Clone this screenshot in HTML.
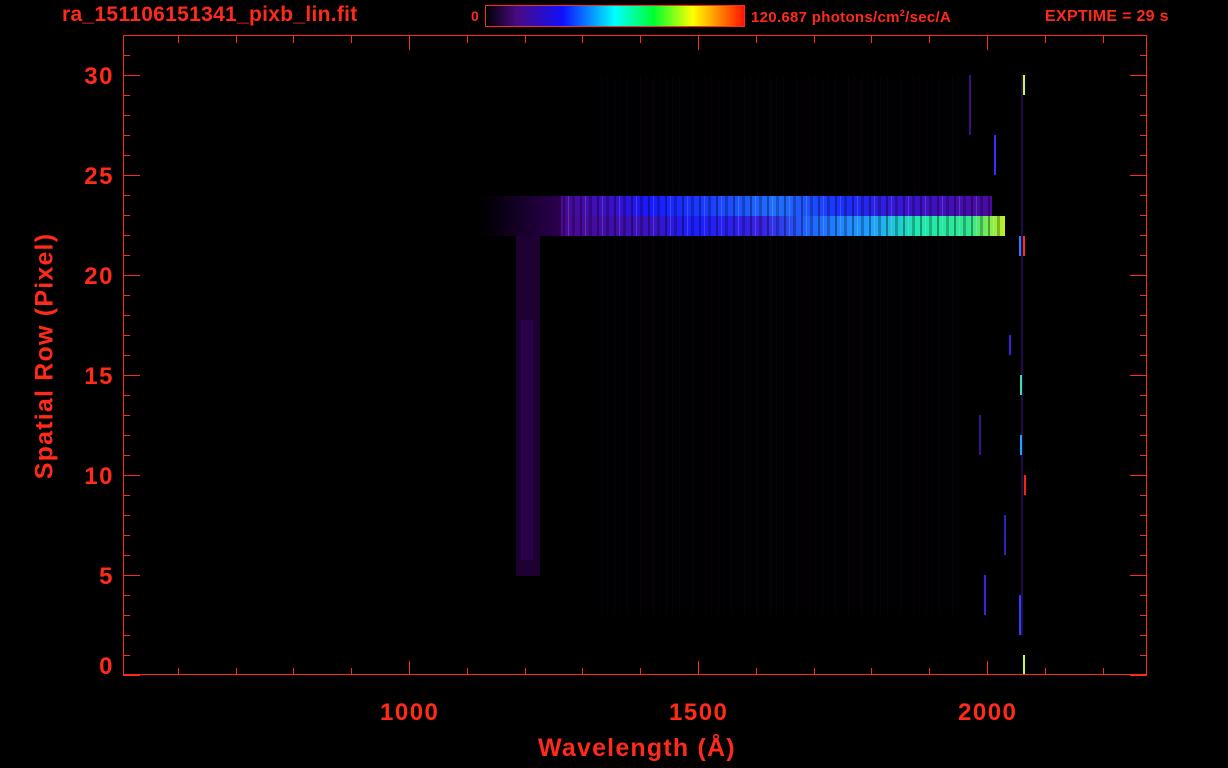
<!DOCTYPE html>
<html><head><meta charset="utf-8"><style>
html,body{margin:0;padding:0;background:#000;}
body{width:1228px;height:768px;position:relative;overflow:hidden;font-family:"Liberation Sans",Arial,sans-serif;font-weight:bold;color:#ff2a1a;}
.t{position:absolute;white-space:nowrap;}
.n{font-size:24px;letter-spacing:1.5px;}
</style></head><body>
<svg width="1228" height="768" style="position:absolute;left:0;top:0">
<defs>
<linearGradient id="cb" x1="0" x2="1">
<stop offset="0" stop-color="#000"/><stop offset="0.12" stop-color="#4a0a80"/><stop offset="0.3" stop-color="#1010ff"/><stop offset="0.5" stop-color="#00ffff"/><stop offset="0.65" stop-color="#00ff30"/><stop offset="0.8" stop-color="#ffff00"/><stop offset="1" stop-color="#ff1000"/></linearGradient>
<linearGradient id="b1" x1="0" x2="1">
<stop offset="0" stop-color="#4a0a90"/><stop offset="0.12" stop-color="#3a10c8"/><stop offset="0.2" stop-color="#1818ff"/><stop offset="0.35" stop-color="#1a40ff"/><stop offset="0.5" stop-color="#2070ff"/><stop offset="0.65" stop-color="#1a30ff"/><stop offset="0.8" stop-color="#3a14d0"/><stop offset="1" stop-color="#4a0aa0"/></linearGradient>
<linearGradient id="b2" x1="0" x2="1">
<stop offset="0" stop-color="#4a0890"/><stop offset="0.2" stop-color="#3a12c0"/><stop offset="0.3" stop-color="#1a20ff"/><stop offset="0.45" stop-color="#3a20e0"/><stop offset="0.55" stop-color="#2060ff"/><stop offset="0.7" stop-color="#20a0ff"/><stop offset="0.8" stop-color="#20e8b0"/><stop offset="0.92" stop-color="#30e890"/><stop offset="1" stop-color="#c0f020"/></linearGradient>
<linearGradient id="tail" x1="0" x2="1">
<stop offset="0" stop-color="#000"/><stop offset="1" stop-color="#2a0050"/></linearGradient>
<pattern id="st" width="17" height="10" patternUnits="userSpaceOnUse">
<rect x="2" width="2" height="10" fill="#000" opacity="0.35"/><rect x="7" width="1" height="10" fill="#fff" opacity="0.15"/><rect x="11" width="3" height="10" fill="#000" opacity="0.25"/></pattern>
<pattern id="fs" width="13" height="10" patternUnits="userSpaceOnUse">
<rect x="3" width="1" height="10" fill="#2a0040"/><rect x="9" width="1" height="10" fill="#180028"/></pattern>
</defs>
<rect x="600" y="75" width="360" height="540" fill="url(#fs)" opacity="0.25"/>
<rect x="480" y="196" width="81" height="40" fill="url(#tail)"/>
<rect x="561" y="196" width="431" height="20" fill="url(#b1)"/>
<rect x="561" y="196" width="431" height="20" fill="url(#st)"/>
<rect x="561" y="216" width="444" height="20" fill="url(#b2)"/>
<rect x="561" y="216" width="444" height="20" fill="url(#st)"/>
<rect x="516" y="236" width="24" height="340" fill="#1e0032"/>
<rect x="521" y="320" width="12" height="240" fill="#2a0048"/>
<g stroke-width="2">
<line x1="1022" y1="75" x2="1022" y2="635" stroke="#5020c0" opacity="0.4"/>
<line x1="1024" y1="75" x2="1024" y2="95" stroke="#c0ff40"/>
<line x1="1020" y1="236" x2="1020" y2="256" stroke="#2080ff"/>
<line x1="1024" y1="236" x2="1024" y2="256" stroke="#ff3010"/>
<line x1="1025" y1="475" x2="1025" y2="495" stroke="#ff2010"/>
<line x1="1021" y1="435" x2="1021" y2="455" stroke="#20a0ff"/>
<line x1="1021" y1="375" x2="1021" y2="395" stroke="#40e0a0"/>
<line x1="1020" y1="595" x2="1020" y2="635" stroke="#3040ff"/>
<line x1="1024" y1="655" x2="1024" y2="675" stroke="#c0ff40"/>
<line x1="995" y1="135" x2="995" y2="175" stroke="#3030ff"/>
<line x1="1010" y1="335" x2="1010" y2="355" stroke="#4020e0"/>
<line x1="985" y1="575" x2="985" y2="615" stroke="#4020e0"/>
<line x1="970" y1="75" x2="970" y2="135" stroke="#3a1080"/>
<line x1="980" y1="415" x2="980" y2="455" stroke="#3a1090"/>
<line x1="1005" y1="515" x2="1005" y2="555" stroke="#3020c0"/>
</g>
<rect x="485.5" y="5.5" width="259" height="21" fill="url(#cb)" stroke="#ff2a1a"/>
<rect x="123.5" y="35.5" width="1023" height="639" fill="none" stroke="#ff2a1a"/>
<g stroke="#ff2a1a" stroke-width="1" id="ticks"></g>
</svg>
<script>
(function(){var g=document.getElementById('ticks'),s='';
for(var l=600;l<=2200;l+=100){var x=Math.round(409+(l-1000)*0.578)+0.5;var L=(l%500==0)?14:7;
s+='<line x1="'+x+'" y1="675" x2="'+x+'" y2="'+(675-L)+'"/><line x1="'+x+'" y1="36" x2="'+x+'" y2="'+(36+L)+'"/>';}
for(var v=0;v<=31;v++){var y=675-v*20+0.5;if(y<36)break;var L=(v%5==0)?17:7;
s+='<line x1="123" y1="'+y+'" x2="'+(123+L)+'" y2="'+y+'"/><line x1="1147" y1="'+y+'" x2="'+(1147-L)+'" y2="'+y+'"/>';}
g.innerHTML=s;})();
</script>
<div class="t" style="left:62px;top:3px;font-size:21px;letter-spacing:0.3px;">ra_151106151341_pixb_lin.fit</div>
<div class="t" style="left:471px;top:8px;font-size:14px;">0</div>
<div class="t" style="left:751px;top:8px;font-size:15px;letter-spacing:0.3px;">120.687 photons/cm<sup style="font-size:9px">2</sup>/sec/A</div>
<div class="t" style="left:1045px;top:8px;font-size:16px;letter-spacing:0.3px;">EXPTIME = 29 s</div>
<div class="t n" style="right:1114px;top:63px;">30</div>
<div class="t n" style="right:1114px;top:163px;">25</div>
<div class="t n" style="right:1114px;top:263px;">20</div>
<div class="t n" style="right:1114px;top:363px;">15</div>
<div class="t n" style="right:1114px;top:463px;">10</div>
<div class="t n" style="right:1114px;top:563px;">5</div>
<div class="t n" style="right:1114px;top:653px;">0</div>
<div class="t n" style="left:380px;top:699px;">1000</div>
<div class="t n" style="left:669px;top:699px;">1500</div>
<div class="t n" style="left:958px;top:699px;">2000</div>
<div class="t" style="left:538px;top:734px;font-size:25px;letter-spacing:1.2px;">Wavelength (Å)</div>
<div class="t" style="left:45px;top:356px;font-size:25px;letter-spacing:1.2px;transform:translate(-50%,-50%) rotate(-90deg);">Spatial Row (Pixel)</div>
</body></html>
